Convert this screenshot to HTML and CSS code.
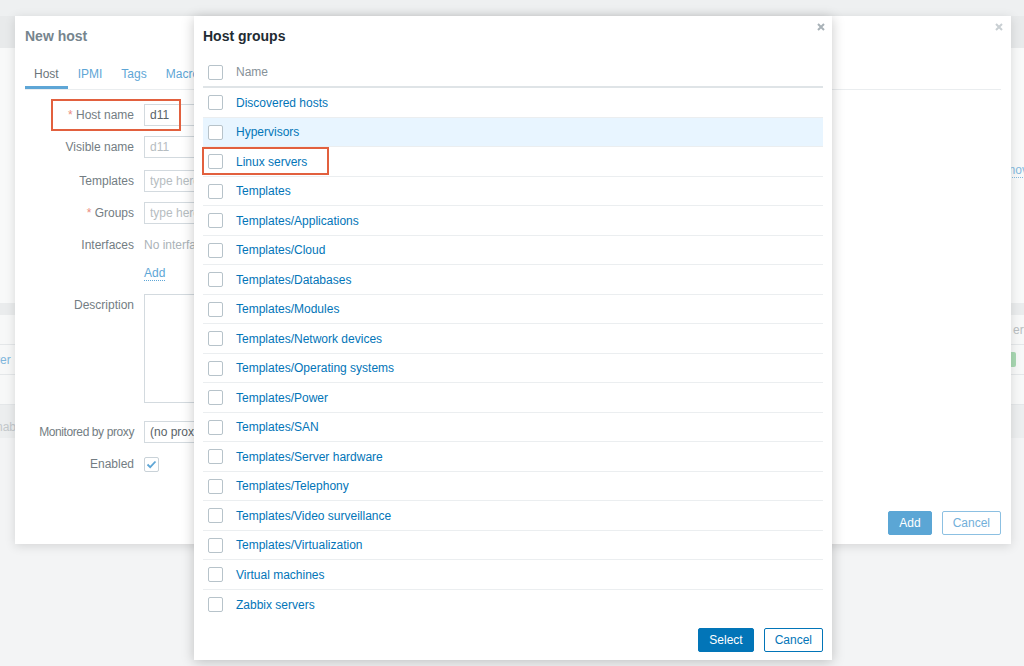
FILE: index.html
```html
<!DOCTYPE html>
<html lang="en">
<head>
<meta charset="utf-8">
<title>Host groups</title>
<link rel="stylesheet" href="styles.css">
</head>
<body>
<div class="page">
  <div class="bg-top"></div>
  <div class="bg-head"></div>
  <div class="bg-filter"><span class="bg-remove">Remove</span></div>
  <div class="bg-band"></div>
  <div class="bg-line"><span class="bg-thead-text">erver</span></div>
  <div class="bg-line"><span class="bg-hostlink">Zabbix server</span><span class="bg-badge"></span></div>
  <div class="bg-line"></div>
  <div class="bg-actions"><span class="bg-enable">Enable</span></div>
</div>

<div class="dialog host-dialog">
  <div class="dlg-title">New host</div>
  <span class="dlg-close"><svg width="8" height="8" viewBox="0 0 8 8"><path d="M1 1L7 7M7 1L1 7" stroke="#c9cfd3" stroke-width="2"/></svg></span>
  <div class="tabs">
    <span class="tab active">Host</span>
    <span class="tab">IPMI</span>
    <span class="tab">Tags</span>
    <span class="tab">Macros</span>
    <span class="tab">Inventory</span>
    <span class="tab">Encryption</span>
  </div>
  <div class="form">
    <div class="frow"><span class="flabel"><span class="req">*</span> Host name</span><input class="finput" value="d11" readonly></div>
    <div class="frow gap-after"><span class="flabel">Visible name</span><input class="finput" placeholder="d11" readonly></div>
    <div class="frow"><span class="flabel">Templates</span><input class="finput" placeholder="type here to search" readonly></div>
    <div class="frow"><span class="flabel"><span class="req">*</span> Groups</span><input class="finput" placeholder="type here to search" readonly></div>
    <div class="frow"><span class="flabel">Interfaces</span><span class="fmuted">No interfaces are defined.</span></div>
    <div class="frow tight"><span class="flabel"></span><span class="flink">Add</span></div>
    <div class="frow top"><span class="flabel">Description</span><textarea class="farea" readonly></textarea></div>
    <div class="frow wide"><span class="flabel flabel-narrow">Monitored by proxy</span><span class="fselect">(no proxy)</span></div>
    <div class="frow"><span class="flabel">Enabled</span><span class="fcheck"><svg width="13" height="13" viewBox="0 0 13 13"><path d="M2.5 6.5L5.2 9.2L10.5 3.5" fill="none" stroke="#5ea6d6" stroke-width="1.8"/></svg></span></div>
  </div>
  <div class="dlg-foot">
    <button class="btn btn-faded">Add</button>
    <button class="btn btn-faded-alt">Cancel</button>
  </div>
</div>

<div class="mark mark-host"></div>

<div class="dialog groups-dialog">
  <div class="dlg-title">Host groups</div>
  <span class="dlg-close"><svg width="8" height="8" viewBox="0 0 8 8"><path d="M1 1L7 7M7 1L1 7" stroke="#a9b2b8" stroke-width="2"/></svg></span>
  <div class="list">
    <div class="lrow lhead"><span class="cb"></span><span>Name</span></div>
    <div class="lrow"><span class="cb"></span><a class="glink">Discovered hosts</a></div>
    <div class="lrow hover"><span class="cb"></span><a class="glink">Hypervisors</a></div>
    <div class="lrow"><span class="cb"></span><a class="glink">Linux servers</a></div>
    <div class="lrow"><span class="cb"></span><a class="glink">Templates</a></div>
    <div class="lrow"><span class="cb"></span><a class="glink">Templates/Applications</a></div>
    <div class="lrow"><span class="cb"></span><a class="glink">Templates/Cloud</a></div>
    <div class="lrow"><span class="cb"></span><a class="glink">Templates/Databases</a></div>
    <div class="lrow"><span class="cb"></span><a class="glink">Templates/Modules</a></div>
    <div class="lrow"><span class="cb"></span><a class="glink">Templates/Network devices</a></div>
    <div class="lrow"><span class="cb"></span><a class="glink">Templates/Operating systems</a></div>
    <div class="lrow"><span class="cb"></span><a class="glink">Templates/Power</a></div>
    <div class="lrow"><span class="cb"></span><a class="glink">Templates/SAN</a></div>
    <div class="lrow"><span class="cb"></span><a class="glink">Templates/Server hardware</a></div>
    <div class="lrow"><span class="cb"></span><a class="glink">Templates/Telephony</a></div>
    <div class="lrow"><span class="cb"></span><a class="glink">Templates/Video surveillance</a></div>
    <div class="lrow"><span class="cb"></span><a class="glink">Templates/Virtualization</a></div>
    <div class="lrow"><span class="cb"></span><a class="glink">Virtual machines</a></div>
    <div class="lrow"><span class="cb"></span><a class="glink">Zabbix servers</a></div>
  </div>
  <div class="dlg-foot">
    <button class="btn btn-primary">Select</button>
    <button class="btn btn-alt">Cancel</button>
  </div>
</div>

<div class="mark mark-linux"></div>
</body>
</html>
```

FILE: styles.css
```css
* { box-sizing: border-box; }
html, body { margin: 0; padding: 0; }
body {
  width: 1024px;
  height: 666px;
  overflow: hidden;
  position: relative;
  background: #f3f4f5;
  font-family: "Liberation Sans", Arial, sans-serif;
  font-size: 12px;
  line-height: 14px;
  color: #1f2c33;
}

/* background page (under overlay) */
.page { width: 1024px; white-space: nowrap; }
.bg-top { height: 16px; background: #eef0f1; }
.bg-head { height: 32px; background: #e8eaeb; }
.bg-filter { height: 255px; background: #f8f9f9; padding-top: 115px; }
.bg-remove { display: inline-block; margin-left: 990px; color: #86bbdf; border-bottom: 1px dotted #86bbdf; }
.bg-band { height: 12px; background: #eaeced; }
.bg-line { height: 30px; border-bottom: 1px solid #e4e7e9; display: flex; align-items: center; background: #f7f8f8; }
.bg-thead-text { margin-left: 1013px; color: #b9bec1; }
.bg-hostlink { margin-left: -62px; color: #7fb6dc; }
.bg-badge { margin-left: auto; margin-right: 8px; width: 30px; height: 15px; border-radius: 2px; background: #a9d9b3; }
.bg-actions { height: 33px; background: #eceeef; padding-top: 15px; }
.bg-enable { display: inline-block; margin-left: -12px; color: #c3c8cb; }

/* dialogs */
.dialog {
  position: absolute;
  background: #fff;
  display: flex;
  flex-direction: column;
}
.host-dialog {
  left: 15px;
  top: 16px;
  width: 996px;
  height: 528px;
  padding: 0 10px 9px;
  box-shadow: 0 2px 10px rgba(0, 0, 0, 0.13);
}
.groups-dialog {
  left: 194px;
  top: 16px;
  width: 638px;
  height: 644px;
  padding: 0 9px 8px;
  box-shadow: 0 2px 12px rgba(0, 0, 0, 0.22);
}
.dlg-title {
  padding-top: 12px;
  font-size: 14px;
  line-height: 16px;
  font-weight: bold;
  color: #1f2c33;
}
.host-dialog .dlg-title { color: #76858e; }
.dlg-close {
  position: absolute;
  top: 7px;
  right: 7px;
  width: 8px;
  height: 8px;
  display: block;
}
.dlg-close svg { display: block; }
.host-dialog .dlg-close { right: 8px; }

/* tabs */
.tabs {
  display: flex;
  margin-top: 16px;
  border-bottom: 1px solid #eaedef;
}
.tab {
  padding: 7px 9px 5px;
  line-height: 14px;
  color: #5ea6d6;
  border-bottom: 3px solid transparent;
}
.tab.active { color: #6b757b; border-bottom-color: #5ea6d6; }
.tab + .tab { margin-left: 1px; }

/* form */
.form {
  padding-top: 14px;
  display: flex;
  flex-direction: column;
  gap: 10px;
}
.frow { display: flex; align-items: center; min-height: 22px; }
.frow.gap-after { margin-bottom: 2px; }
.frow.tight { margin-top: -4px; }
.frow.top { align-items: flex-start; }
.frow.wide { margin-top: 8px; }
.flabel {
  width: 109px;
  flex-shrink: 0;
  margin-right: 10px;
  text-align: right;
  line-height: 22px;
  color: #737d83;
  white-space: nowrap;
}
.flabel-narrow { letter-spacing: -0.4px; }
.req { color: #eb8d80; }
.finput {
  width: 453px;
  height: 22px;
  border: 1px solid #d3dadf;
  padding: 0 5px;
  margin: 0;
  font-family: "Liberation Sans", Arial, sans-serif;
  font-size: 12px;
  color: #5a6368;
  background: #fff;
  outline: none;
}
.finput::placeholder { color: #b6bdc1; }
.fmuted { color: #abb3b8; line-height: 22px; }
.flink { color: #5ea6d6; border-bottom: 1px dotted #5ea6d6; line-height: 14px; }
.farea {
  width: 453px;
  height: 109px;
  border: 1px solid #d3dadf;
  margin: 0;
  resize: none;
  outline: none;
  background: #fff;
}
.fselect {
  width: 200px;
  height: 22px;
  border: 1px solid #d3dadf;
  padding: 0 5px;
  line-height: 20px;
  color: #5a6368;
}
.fcheck {
  width: 15px;
  height: 15px;
  border: 1px solid #c9d2d8;
  border-radius: 2px;
  display: flex;
  align-items: center;
  justify-content: center;
}
.fcheck svg { display: block; }

/* footer buttons */
.dlg-foot {
  margin-top: auto;
  display: flex;
  justify-content: flex-end;
  gap: 10px;
}
.btn {
  height: 24px;
  padding: 0 10px;
  border: 1px solid #0275b8;
  border-radius: 2px;
  font-family: "Liberation Sans", Arial, sans-serif;
  font-size: 12px;
  line-height: 22px;
  background: #fff;
  color: #0275b8;
  cursor: pointer;
}
.btn-primary { background: #0275b8; color: #fff; }
.btn-alt { background: #fff; color: #0275b8; }
.btn-faded { background: #5ba6d5; border-color: #5ba6d5; color: #fff; }
.btn-faded-alt { background: #fff; border-color: #8cc0e2; color: #72b0da; }

/* host groups list */
.list { margin-top: 14px; }
.lrow {
  display: flex;
  align-items: center;
  height: 29.5px;
  padding-left: 5px;
  padding-top: 1px;
  border-bottom: 1px solid #ebeef0;
}
.lrow:last-child { border-bottom: none; }
.lrow.lhead {
  height: 30px;
  padding-top: 0;
  border-bottom: 2px solid #dfe4e7;
  color: #869198;
}
.lrow.hover { background: #e8f5ff; }
.cb {
  width: 15px;
  height: 15px;
  flex-shrink: 0;
  border: 1px solid #b7c3ca;
  border-radius: 2px;
  background: #fff;
  margin-right: 13px;
}
.glink { color: #0275b8; text-decoration: none; }

/* annotation boxes */
.mark {
  position: absolute;
  border: 2px solid #e2603e;
}
.mark-host { left: 51px; top: 99px; width: 130px; height: 32px; }
.mark-linux { left: 202px; top: 147px; width: 127px; height: 28px; }
```
